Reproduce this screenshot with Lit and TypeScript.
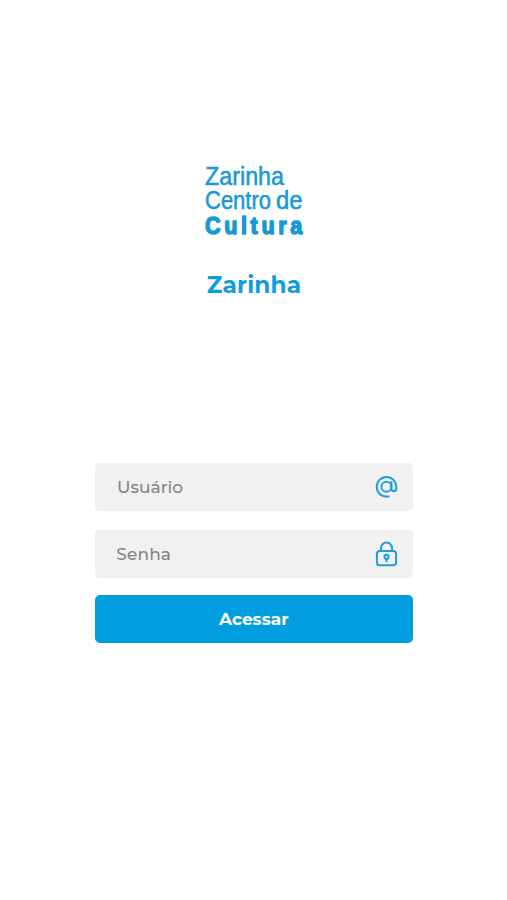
import { LitElement, html, css, svg } from "lit";
import { customElement } from "lit/decorators.js";

const atIcon = svg`
  <circle cx="11.4" cy="11.8" r="5"/>
  <path d="M16.4 7V13.7a2.4 2.4 0 0 0 4.9 0V11.8a9.8 9.8 0 1 0-9.8 9.8h2.2"/>`;

const lockIcon = svg`
  <rect x="1.9" y="9.6" width="19.2" height="14.2" rx="2.8"/>
  <path d="M6 9.6V6.6a5.5 5.5 0 0 1 11 0v3"/>
  <circle cx="11.5" cy="15.3" r="2.1"/>
  <path d="M11.5 17.4v2.4"/>`;

@customElement("app-root")
export class AppRoot extends LitElement {
  static styles = css`
    :host {
      display: flex;
      flex-direction: column;
      align-items: center;
      box-sizing: border-box;
      height: 900px;
      padding-top: 160px;
      background: #fff;
      font-family: Montserrat, Inter, sans-serif;
      color: #119cdc;
    }
    .logo {
      display: block;
      overflow: visible;
      width: 110px;
      height: 80px;
      font-family: "Liberation Sans", sans-serif;
      fill: #1699d6;
      stroke: #1699d6;
      stroke-linejoin: round;
    }
    .light {
      font-size: 25px;
      stroke-width: 0.5px;
    }
    .heavy {
      font-size: 24px;
      font-weight: 700;
      stroke-width: 1.5px;
    }
    h1 {
      margin: 30px 0 0 1px;
      height: 30px;
      font-size: 23.3px;
      line-height: 30px;
      font-weight: 700;
      letter-spacing: 0.1px;
    }
    form {
      width: 317.5px;
      margin: 162.5px 0 0 0.5px;
    }
    .field {
      display: flex;
      align-items: center;
      justify-content: space-between;
      box-sizing: border-box;
      height: 48.5px;
      margin-bottom: 19px;
      padding: 0 14px 0 22px;
      border-radius: 4px;
      background: #f1f1f1;
      color: #858585;
      font-size: 17px;
      font-weight: 500;
    }
    .field + .field {
      height: 48px;
      margin-bottom: 16.5px;
      padding-left: 21.3px;
      letter-spacing: 0.1px;
    }
    .icon {
      width: 24px;
      height: 26px;
      fill: none;
      stroke: #229fd8;
      stroke-width: 2px;
      stroke-linecap: round;
      stroke-linejoin: round;
    }
    button {
      display: block;
      width: 100%;
      height: 48.5px;
      padding: 0;
      border: 0;
      border-radius: 5px;
      background: #009ddf;
      color: #fff;
      font: 700 17px/48px Montserrat, Inter, sans-serif;
    }
  `;

  render() {
    return html`
      <svg class="logo" viewBox="0 0 110 80" role="img" aria-label="Zarinha Centro de Cultura">
        <text class="light" x="6" y="25" textLength="79" lengthAdjust="spacingAndGlyphs">Zarinha</text>
        <text class="light" x="6" y="49" textLength="66" lengthAdjust="spacingAndGlyphs">Centro</text>
        <text class="light" x="77" y="49" textLength="26.5" lengthAdjust="spacingAndGlyphs">de</text>
        <text class="heavy" transform="translate(6 74) scale(0.9 1)" textLength="108">Cultura</text>
      </svg>
      <h1>Zarinha</h1>
      <form>
        <label class="field">
          <span>Usuário</span>
          <svg class="icon" viewBox="0 -1 24 26">${atIcon}</svg>
        </label>
        <label class="field">
          <span>Senha</span>
          <svg class="icon" viewBox="0 -0.5 24 26">${lockIcon}</svg>
        </label>
        <button type="button">Acessar</button>
      </form>
    `;
  }
}
